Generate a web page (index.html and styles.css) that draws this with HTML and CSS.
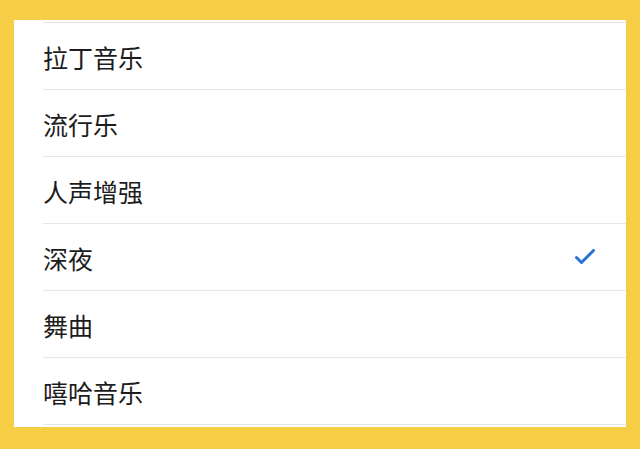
FILE: index.html
```html
<!DOCTYPE html>
<html lang="zh-CN">
<head>
  <meta charset="UTF-8" />
  <meta name="viewport" content="width=device-width, initial-scale=1.0"/>
  <title>均衡器</title>
  <link rel="stylesheet" href="styles.css">
</head>
<body>
  <div class="panel">
    <ul class="eq-list">
      <li class="eq-item">拉丁音乐</li>
      <li class="eq-item">流行乐</li>
      <li class="eq-item">人声增强</li>
      <li class="eq-item selected">
        深夜
        <svg class="check" viewBox="0 0 20 16" width="20" height="16">
          <path d="M1.5 8.5 L6.5 13.5 L18.5 1.5" />
        </svg>
      </li>
      <li class="eq-item">舞曲</li>
      <li class="eq-item">嘻哈音乐</li>
    </ul>
  </div>
</body>
</html>
```

FILE: styles.css
```css
body {
  margin: 0;
  background-color: #f6ce46;
  padding: 20px 14px 22px;
  font-family: "Noto Sans CJK SC", "Noto Sans", sans-serif;
}
.panel {
  background-color: #fff;
  height: 407px;
  padding-top: 2px;
  box-sizing: border-box;
}
.eq-list {
  list-style: none;
  margin: 0;
  padding: 0 0 0 29px;
}
.eq-item {
  height: 66px;
  border-top: 1px solid #e6e6e6;
  display: flex;
  align-items: center;
  justify-content: space-between;
  padding-right: 31px;
  padding-top: 2px;
  box-sizing: content-box;
  height: 64px;
  font-size: 25px;
  color: #1c1c1c;
}
.eq-item:last-child {
  border-bottom: 1px solid #e6e6e6;
}
.check {
  fill: none;
  stroke: #2a72d6;
  stroke-width: 3;
  stroke-linecap: round;
  stroke-linejoin: round;
  margin-top: -2px;
}
```
